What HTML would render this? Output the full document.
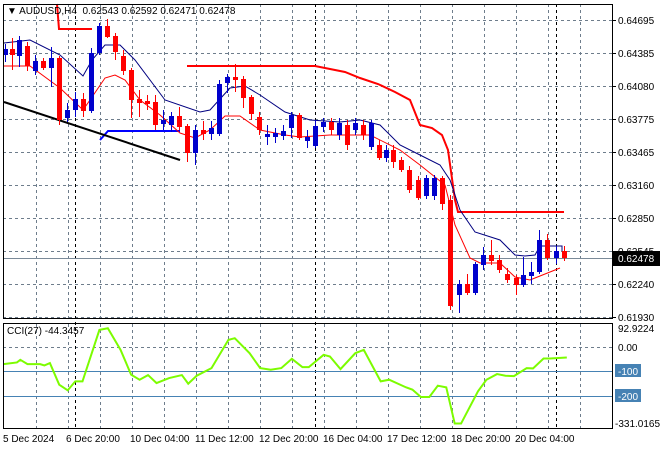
<!DOCTYPE html>
<html><head><meta charset="utf-8"><style>
html,body{margin:0;padding:0;background:#fff;width:660px;height:450px;overflow:hidden}
svg{display:block;font-family:"Liberation Sans",sans-serif}
</style></head><body>
<svg id="s" width="660" height="450" viewBox="0 0 660 450" xmlns="http://www.w3.org/2000/svg">
<rect width="660" height="450" fill="#fff"/>
<g id="grid" stroke="#6e7d8c" stroke-width="1" stroke-dasharray="3,3"></g>
<g stroke="#000" stroke-dasharray="3,3">
<line x1="75.5" y1="4" x2="75.5" y2="428"/><line x1="315.5" y1="4" x2="315.5" y2="428"/><line x1="556.5" y1="4" x2="556.5" y2="428"/>
</g>
<line x1="3" y1="258.5" x2="612" y2="258.5" stroke="#7a8a99"/>
<g stroke="#4682b4"><line x1="3" y1="371.5" x2="612" y2="371.5"/><line x1="3" y1="396.5" x2="612" y2="396.5"/></g>
<!-- lines -->
<polyline fill="none" stroke="#ff0000" stroke-width="2" points="57,4 59,29 92,29"/>
<polyline fill="none" stroke="#ff0000" stroke-width="2" points="187,66 315,66 330,69 345,72 360,78 378,84 395,92 410,100 420,125 432,128 442,135 448,150 455,200 458,212 564,212"/>
<polyline fill="none" stroke="#0000ff" stroke-width="2" points="100,140 108,131 180,131"/>
<line x1="4" y1="102" x2="180" y2="160" stroke="#000" stroke-width="2"/>
<polyline fill="none" stroke="#000080" stroke-width="1" points="4,43 30,40 60,55 83,76 92,60 105,45 120,45 135,60 165,100 200,112 210,110 230,88 245,86 260,95 285,112 310,120 340,122 360,120 380,125 400,145 420,155 440,165 450,180 460,210 475,232 500,240 515,255 525,256 535,255 540,246 562,246 562,251"/>
<polyline fill="none" stroke="#ff0000" stroke-width="1" points="4,66 30,66 60,88 83,110 90,100 105,78 115,75 125,80 140,100 160,115 180,133 195,138 210,130 225,116 240,116 260,130 285,135 300,137 330,135 370,135 400,150 420,165 445,185 455,225 470,258 480,263 500,263 515,277 530,280 540,276 560,268"/>
<g id="candles"></g>
<!-- CCI -->
<g transform="translate(0,310) scale(0.423,0.332)">
<polyline fill="none" stroke="#7cfc00" stroke-width="2" vector-effect="non-scaling-stroke" points="8,163 40,158 48,150 65,163 95,163 105,167 118,160 140,225 160,242 178,215 195,215 235,60 255,55 285,120 310,195 330,210 350,196 370,220 400,205 430,196 445,222 465,198 500,175 540,90 555,85 590,130 615,175 640,180 665,175 690,147 715,172 730,172 765,135 780,140 805,178 840,130 860,120 900,215 920,210 960,233 975,240 995,262 1015,262 1035,228 1055,233 1075,342 1090,342 1130,245 1150,210 1175,193 1195,198 1215,199 1245,175 1260,176 1285,146 1300,146 1340,143"/>
</g>
<!-- frames -->
<rect x="3.5" y="4.5" width="609" height="314" fill="none" stroke="#000"/>
<rect x="3.5" y="323.5" width="609" height="105" fill="none" stroke="#000"/>
<g font-size="10" fill="#000">
<text x="7" y="14">▼ AUDUSD,H4&#160; 0.62543 0.62592 0.62471 0.62478</text>
<text x="7" y="334">CCI(27) -44.3457</text>
<g id="pl"></g>
<rect x="612" y="251" width="48" height="15" fill="#000"/>
<text x="618" y="262" fill="#fff">0.62478</text>
<text x="618" y="332">92.9224</text>
<text x="618" y="351">0.00</text>
<rect x="615" y="364" width="26" height="13" fill="#4682b4"/><text x="618" y="375" fill="#fff">-100</text>
<rect x="615" y="389" width="26" height="13" fill="#4682b4"/><text x="618" y="400" fill="#fff">-200</text>
<text x="615" y="427">-331.0165</text>
<text x="3" y="442">5 Dec 2024</text>
<text x="66" y="442">6 Dec 20:00</text>
<text x="130" y="442">10 Dec 04:00</text>
<text x="195" y="442">11 Dec 12:00</text>
<text x="259" y="442">12 Dec 20:00</text>
<text x="323" y="442">16 Dec 04:00</text>
<text x="387" y="442">17 Dec 12:00</text>
<text x="451" y="442">18 Dec 20:00</text>
<text x="515" y="442">20 Dec 04:00</text>
</g>
</svg>
<script>
var NS="http://www.w3.org/2000/svg";
function el(p,t,a){var e=document.createElementNS(NS,t);for(var k in a)e.setAttribute(k,a[k]);p.appendChild(e);return e;}
var g=document.getElementById('grid');
for(var x=36;x<612;x+=32){el(g,'line',{x1:x+.5,y1:4,x2:x+.5,y2:318});el(g,'line',{x1:x+.5,y1:324,x2:x+.5,y2:428});}
var ys=[20,53,86,119,152,185,218,251,284,317];
var labs=["0.64695","0.64385","0.64080","0.63775","0.63465","0.63160","0.62850","0.62545","0.62240","0.61930"];
var pl=document.getElementById('pl');
ys.forEach(function(y,i){el(g,'line',{x1:3,y1:y+.5,x2:612,y2:y+.5});el(pl,'line',{x1:612,y1:y+.5,x2:616,y2:y+.5,stroke:'#000'});var t=el(pl,'text',{x:618,y:y+4});t.textContent=labs[i];});
el(g,'line',{x1:3,y1:347.5,x2:612,y2:347.5});
// x, top, bottom, high, low, color(b/r)
var C=[[5,49,55,44,62,'b'],[12,49,55,38,70,'r'],[19,40,56,36,67,'b'],[27,46,66,42,71,'r'],[35,61,71,55,75,'b'],[43,61,68,58,70,'r'],[51,58,68,47,87,'b'],[59,58,120,56,125,'r'],[67,110,118,103,122,'b'],[75,99,110,92,117,'b'],[83,99,111,93,117,'r'],[91,53,111,48,113,'b'],[99,26,53,23,55,'b'],[107,26,37,19,38,'r'],[115,36,52,33,60,'r'],[123,56,71,50,75,'r'],[131,70,100,68,118,'r'],[139,99,103,90,117,'r'],[147,101,104,95,110,'r'],[155,102,125,95,130,'r'],[163,120,124,110,130,'b'],[171,116,125,112,132,'b'],[179,116,127,107,130,'r'],[187,126,153,124,162,'r'],[195,130,153,125,165,'b'],[203,130,134,121,140,'r'],[211,128,134,121,140,'b'],[219,84,134,80,136,'b'],[227,77,83,74,93,'b'],[235,77,80,64,92,'r'],[243,79,98,76,108,'r'],[251,97,114,95,120,'r'],[259,117,130,112,135,'r'],[267,134,137,125,145,'b'],[275,133,137,128,143,'b'],[283,131,136,125,140,'b'],[291,115,128,112,138,'b'],[299,115,138,113,140,'r'],[307,137,141,130,148,'b'],[315,126,146,120,148,'b'],[323,122,127,118,132,'b'],[331,122,130,118,135,'r'],[339,123,135,118,140,'b'],[347,125,145,120,150,'r'],[355,123,130,118,135,'b'],[363,125,135,120,140,'r'],[371,123,147,120,150,'b'],[379,145,158,140,160,'r'],[386,150,158,145,162,'b'],[393,150,162,145,168,'r'],[401,160,170,157,172,'r'],[409,170,190,166,193,'r'],[418,180,198,176,200,'r'],[426,178,196,175,199,'b'],[434,178,196,175,200,'b'],[442,178,204,176,210,'r'],[450,200,306,195,310,'r'],[459,284,295,280,313,'b'],[467,284,293,274,295,'r'],[475,264,293,262,295,'b'],[483,255,265,247,270,'b'],[491,255,261,240,265,'r'],[499,260,270,255,273,'r'],[507,274,280,268,283,'r'],[516,278,285,275,295,'r'],[523,275,285,257,287,'b'],[531,272,276,262,284,'b'],[539,240,272,230,274,'b'],[547,240,258,234,260,'r'],[556,251,258,246,264,'b'],[564,251,258,246,261,'r']];
var cg=document.getElementById('candles');
C.forEach(function(c){var col=c[5]=='b'?'#0000cc':'#ff0000';
el(cg,'line',{x1:c[0]+.5,y1:c[3],x2:c[0]+.5,y2:c[4],stroke:col});
el(cg,'rect',{x:c[0]-2,y:c[1],width:5,height:Math.max(1,c[2]-c[1]),fill:col});});
</script>
</body></html>
